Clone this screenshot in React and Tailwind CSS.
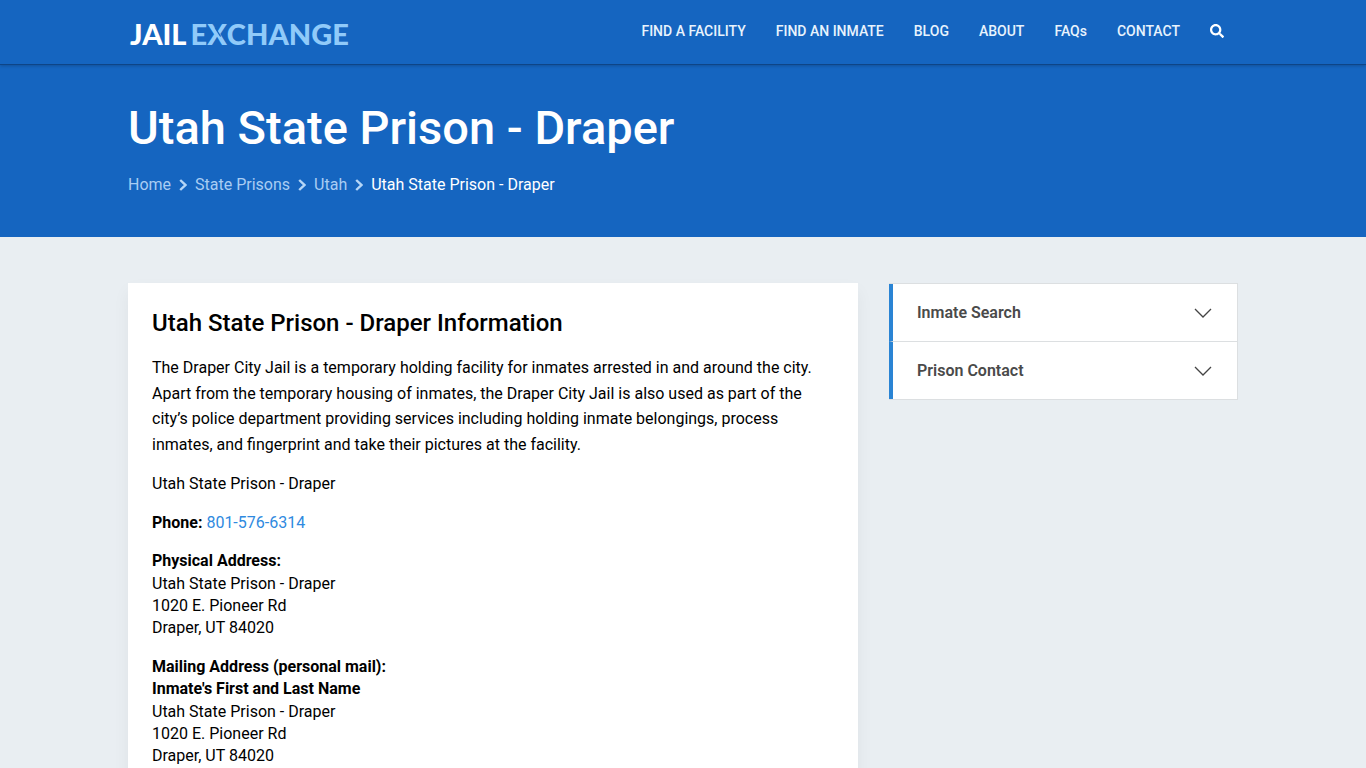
import { FaSearch } from "react-icons/fa";

const navLinks = ["FIND A FACILITY", "FIND AN INMATE", "BLOG", "ABOUT", "FAQs", "CONTACT"];
const trail = ["Home", "State Prisons", "Utah"];
const panels = ["Inmate Search", "Prison Contact"];

function Logo() {
  return (
    <a
      href="#"
      aria-label="Jail Exchange"
      className="flex gap-1 pt-0.5 pl-0.5 font-[Lato,sans-serif] text-[29px] leading-none font-black text-white"
    >
      <span>JAIL</span>
      <span className="text-[#90caf9]">
        E
        <span className="relative">
          X
          <svg
            aria-hidden="true"
            viewBox="0 0 20 22"
            className="absolute top-2 left-0 h-[22px] w-5 fill-none stroke-[#1565c0] stroke-[1.3]"
          >
            <path d="M8 3.5 13.6 12.5" />
          </svg>
        </span>
        CHANGE
      </span>
    </a>
  );
}

function Header() {
  return (
    <header className="border-b border-[#0e4587] shadow-[0_1px_3px_rgba(0,0,0,0.2)]">
      <div className="mx-auto flex h-16 max-w-[1110px] items-center justify-between">
        <Logo />
        <nav className="flex items-center gap-[30px] pr-3.5 pb-0.5 text-sm font-medium text-[#e8f3fd]">
          {navLinks.map((label) => (
            <a key={label} href="#">{label}</a>
          ))}
          <button type="button" aria-label="Search" className="text-white">
            <FaSearch className="size-3.5" />
          </button>
        </nav>
      </div>
    </header>
  );
}

function Breadcrumb() {
  return (
    <nav aria-label="Breadcrumb" className="mt-4 flex items-center text-base">
      {trail.map((label) => (
        <span key={label} className="flex items-center">
          <a href="#" className="text-[#a9cdf3]">{label}</a>
          <svg aria-hidden="true" viewBox="0 0 8 12" className="mx-2 h-3 w-2 fill-none stroke-[#b5d6f7] stroke-[2.4]">
            <path d="M1.2 1 6.4 6 1.2 11" />
          </svg>
        </span>
      ))}
      <span aria-current="page" className="text-white">Utah State Prison - Draper</span>
    </nav>
  );
}

function Sidebar() {
  return (
    <aside className="w-[349px] shrink-0 border border-l-0 border-[#dcdfe1]">
      {panels.map((label) => (
        <button
          key={label}
          type="button"
          className="flex h-[58px] w-full items-center justify-between border-b border-l-4 border-b-[#dcdfe1] border-l-[#2a84d4] bg-white pr-[25px] pl-6 text-left font-semibold text-[#4a4a4a] last:h-[57px] last:border-b-0"
        >
          {label}
          <svg aria-hidden="true" viewBox="0 0 18 10" className="h-2.5 w-[18px] fill-none stroke-[#444] stroke-[1.3]">
            <path d="M1 1 9 9 17 1" />
          </svg>
        </button>
      ))}
    </aside>
  );
}

function Information() {
  return (
    <article className="min-w-0 flex-1 bg-white p-6 text-base leading-[1.4] text-black shadow-[0_8px_16px_rgba(0,0,0,0.05)]">
      <h2 className="mb-4 text-2xl leading-8 font-medium">Utah State Prison - Draper Information</h2>
      <p className="mb-4 leading-[1.6]">
        The Draper City Jail is a temporary holding facility for inmates arrested in and around the city. Apart from
        the temporary housing of inmates, the Draper City Jail is also used as part of the city’s police department
        providing services including holding inmate belongings, process inmates, and fingerprint and take their
        pictures at the facility.
      </p>
      <p className="mb-4">Utah State Prison - Draper</p>
      <p className="mb-4">
        <strong className="font-bold">Phone:</strong>{" "}
        <a href="tel:801-576-6314" className="text-[#2f8ae0]">801-576-6314</a>
      </p>
      <p className="mb-4">
        <strong className="font-bold">Physical Address:</strong>
        <br />
        Utah State Prison - Draper
        <br />
        1020 E. Pioneer Rd
        <br />
        Draper, UT 84020
      </p>
      <p>
        <strong className="font-bold">
          Mailing Address (personal mail):
          <br />
          Inmate's First and Last Name
        </strong>
        <br />
        Utah State Prison - Draper
        <br />
        1020 E. Pioneer Rd
        <br />
        Draper, UT 84020
      </p>
    </article>
  );
}

export default function App() {
  return (
    <div className="h-screen overflow-hidden bg-[#e9eef2] font-[Roboto,sans-serif]">
      <div className="bg-[#1565c0]">
        <Header />
        <div className="mx-auto max-w-[1110px] pt-[34px] pb-10">
          <h1 className="text-[47px] leading-[58px] font-medium text-white">Utah State Prison - Draper</h1>
          <Breadcrumb />
        </div>
      </div>
      <main className="mx-auto flex max-w-[1110px] items-start gap-[31px] pt-[46px]">
        <Information />
        <Sidebar />
      </main>
    </div>
  );
}
